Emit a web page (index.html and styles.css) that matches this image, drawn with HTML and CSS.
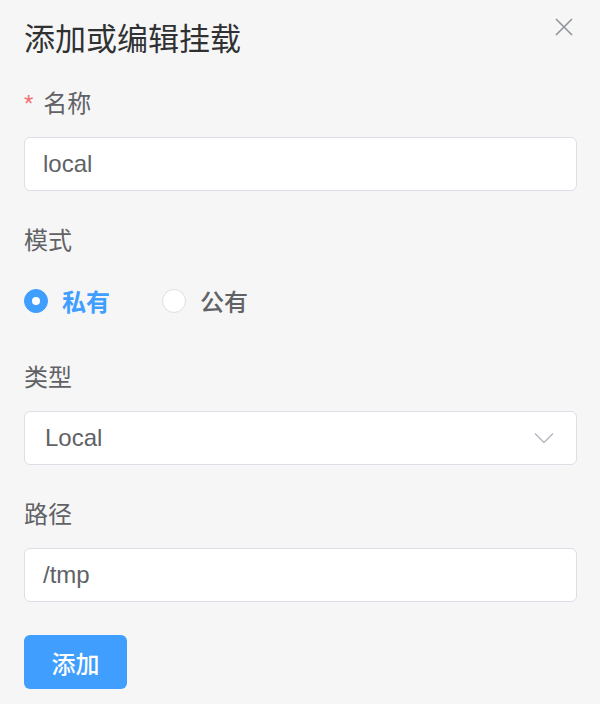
FILE: index.html
```html
<!DOCTYPE html>
<html lang="zh-CN">
<head>
<meta charset="utf-8">
<title>添加或编辑挂载</title>
<link rel="stylesheet" href="styles.css">
</head>
<body>
<div class="dialog">
  <header class="dialog-header">
    <h2 class="dialog-title">添加或编辑挂载</h2>
    <button class="dialog-close" type="button" aria-label="关闭">
      <svg width="18" height="18" viewBox="0 0 18 18"><path d="M1 1L17 17M17 1L1 17" stroke="#909399" stroke-width="1.6" fill="none"/></svg>
    </button>
  </header>
  <form class="form">
    <div class="form-item">
      <label class="form-label is-required">名称</label>
      <div class="input"><input class="input-inner" type="text" value="local"></div>
    </div>
    <div class="form-item">
      <label class="form-label">模式</label>
      <div class="radio-group">
        <label class="radio is-checked"><span class="radio-circle"></span><span class="radio-label">私有</span></label>
        <label class="radio"><span class="radio-circle"></span><span class="radio-label">公有</span></label>
      </div>
    </div>
    <div class="form-item">
      <label class="form-label">类型</label>
      <div class="select">
        <span class="select-value">Local</span>
        <svg class="select-arrow" width="20" height="12" viewBox="0 0 20 12"><path d="M1 1.5L10 10.5L19 1.5" stroke="#b4b8c0" stroke-width="1.5" fill="none"/></svg>
      </div>
    </div>
    <div class="form-item">
      <label class="form-label">路径</label>
      <div class="input"><input class="input-inner" type="text" value="/tmp"></div>
    </div>
    <div class="form-item">
      <button class="btn-primary" type="button">添加</button>
    </div>
  </form>
</div>
</body>
</html>
```
FILE: styles.css
```css
* { box-sizing: border-box; }
html, body {
  margin: 0;
  padding: 0;
  background: #f6f6f6;
}
body {
  font-family: "Liberation Sans", "Noto Sans CJK SC", sans-serif;
  color: #606266;
}
.dialog {
  position: relative;
  padding: 17px 23px 0 24px;
}
.dialog-header {
  height: 40px;
}
.dialog-title {
  margin: 0;
  font-size: 31px;
  line-height: 40px;
  font-weight: 400;
  color: #303133;
  font-family: "Noto Sans CJK SC", sans-serif;
}
.dialog-close {
  position: absolute;
  top: 18px;
  right: 27px;
  width: 18px;
  height: 18px;
  padding: 0;
  border: 0;
  background: none;
  display: block;
}
.dialog-close svg { display: block; }
.form {
  margin-top: 30px;
}
.form-item {
  margin-bottom: 33px;
}
.form-label {
  display: block;
  font-size: 24px;
  line-height: 34px;
  margin-bottom: 16px;
  color: #606266;
}
.form-label.is-required::before {
  content: "*";
  color: #f56c6c;
  margin-right: 10px;
  font-family: "Liberation Sans", sans-serif;
}
.input {
  height: 54px;
  border: 1px solid #dcdfe6;
  border-radius: 6px;
  background: #fff;
  display: flex;
  align-items: center;
}
.input-inner {
  width: 100%;
  height: 100%;
  border: 0;
  outline: none;
  background: transparent;
  padding: 0 18px;
  font-family: "Liberation Sans", "Noto Sans CJK SC", sans-serif;
  font-size: 24px;
  color: #606266;
}
.radio-group {
  height: 54px;
  display: flex;
  align-items: center;
}
.radio {
  display: flex;
  align-items: center;
  margin-right: 52px;
}
.radio-circle {
  width: 24px;
  height: 24px;
  border-radius: 50%;
  border: 1px solid #dcdfe6;
  background: #fff;
  display: flex;
  align-items: center;
  justify-content: center;
}
.radio.is-checked .radio-circle {
  background: #409eff;
  border-color: #409eff;
}
.radio.is-checked .radio-circle::after {
  content: "";
  width: 8px;
  height: 8px;
  border-radius: 50%;
  background: #fff;
}
.radio-label {
  margin-left: 14px;
  font-family: "Noto Sans CJK SC", sans-serif;
  font-size: 24px;
  font-weight: 500;
  color: #606266;
  line-height: 34px;
}
.radio.is-checked .radio-label {
  color: #409eff;
  font-weight: 700;
}
.select {
  height: 54px;
  border: 1px solid #dcdfe6;
  border-radius: 6px;
  background: #fff;
  display: flex;
  align-items: center;
  justify-content: space-between;
  padding: 0 22px 0 20px;
}
.select-value {
  font-size: 24px;
  color: #606266;
}
.select-arrow { display: block; }
.btn-primary {
  height: 54px;
  width: 103px;
  padding: 0;
  border: 0;
  border-radius: 6px;
  background: #409eff;
  color: #fff;
  font-family: "Noto Sans CJK SC", sans-serif;
  font-size: 24px;
  font-weight: 500;
  text-align: center;
}
```
